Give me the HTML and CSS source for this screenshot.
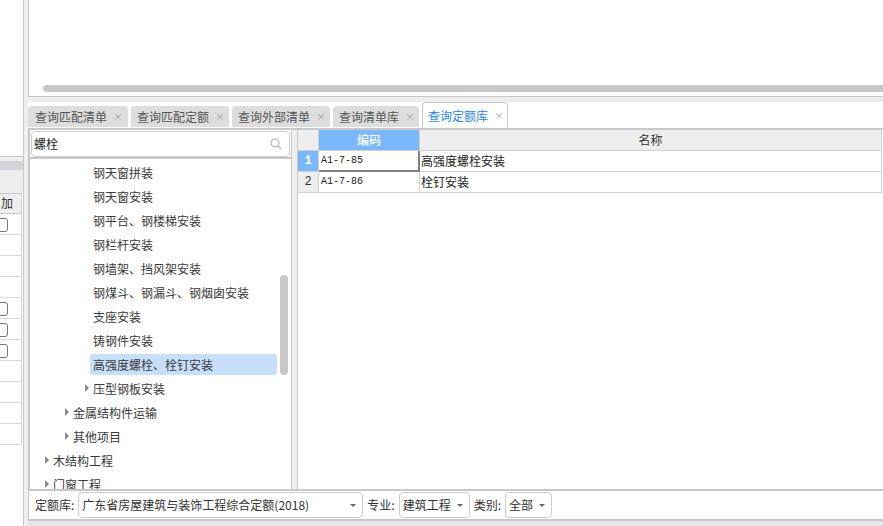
FILE: index.html
```html
<!DOCTYPE html>
<html lang="zh-CN">
<head>
<meta charset="utf-8">
<title>查询定额库</title>
<link rel="stylesheet" href="styles.css">
</head>
<body>
<div class="app">
  <aside class="side">
    <div class="side-top"></div>
    <div class="side-gap"></div>
    <div class="side-banner"></div>
    <div class="side-tools"></div>
    <div class="side-table">
      <div class="side-row side-head">加</div>
      <div class="side-row"><span class="check"></span></div>
      <div class="side-row"></div>
      <div class="side-row"></div>
      <div class="side-row"></div>
      <div class="side-row"><span class="check"></span></div>
      <div class="side-row"><span class="check"></span></div>
      <div class="side-row"><span class="check"></span></div>
      <div class="side-row"></div>
      <div class="side-row"></div>
      <div class="side-row"></div>
      <div class="side-row"></div>
    </div>
  </aside>
  <div class="splitter"></div>
  <main class="main">
    <section class="top-panel">
      <div class="hscroll"></div>
    </section>
    <div class="main-gap"></div>
    <nav class="tabs">
      <div class="tab"><span>查询匹配清单</span><i class="close">×</i></div>
      <div class="tab"><span>查询匹配定额</span><i class="close">×</i></div>
      <div class="tab"><span>查询外部清单</span><i class="close">×</i></div>
      <div class="tab"><span>查询清单库</span><i class="close">×</i></div>
      <div class="tab tab-active"><span>查询定额库</span><i class="close">×</i></div>
    </nav>
    <div class="pane">
      <div class="tree-col">
        <div class="search-wrap">
          <div class="search">
            <span class="search-text">螺栓</span>
            <svg class="search-icon" width="12" height="12" viewBox="0 0 12 12" fill="none" stroke="#b8b8b8" stroke-width="1.3"><circle cx="5" cy="5" r="3.9"/><path d="M8 8l3 3"/></svg>
          </div>
        </div>
        <div class="tree">
          <div class="node leaf"><span class="label">钢天窗拼装</span></div>
          <div class="node leaf"><span class="label">钢天窗安装</span></div>
          <div class="node leaf"><span class="label">钢平台、钢楼梯安装</span></div>
          <div class="node leaf"><span class="label">钢栏杆安装</span></div>
          <div class="node leaf"><span class="label">钢墙架、挡风架安装</span></div>
          <div class="node leaf"><span class="label">钢煤斗、钢漏斗、钢烟囱安装</span></div>
          <div class="node leaf"><span class="label">支座安装</span></div>
          <div class="node leaf"><span class="label">铸钢件安装</span></div>
          <div class="node leaf"><span class="label selected">高强度螺栓、栓钉安装</span></div>
          <div class="node lvl3"><b class="arrow"></b><span class="label">压型钢板安装</span></div>
          <div class="node lvl2"><b class="arrow"></b><span class="label">金属结构件运输</span></div>
          <div class="node lvl2"><b class="arrow"></b><span class="label">其他项目</span></div>
          <div class="node lvl1"><b class="arrow"></b><span class="label">木结构工程</span></div>
          <div class="node lvl1"><b class="arrow"></b><span class="label">门窗工程</span></div>
          <div class="vscroll"></div>
        </div>
      </div>
      <div class="pane-split"></div>
      <div class="grid">
        <div class="cell corner"></div>
        <div class="cell head head-on">编码</div>
        <div class="cell head">名称</div>
        <div class="cell rowhead rowhead-on">1</div>
        <div class="cell code cell-current">A1-7-85</div>
        <div class="cell name">高强度螺栓安装</div>
        <div class="cell rowhead">2</div>
        <div class="cell code">A1-7-86</div>
        <div class="cell name">栓钉安装</div>
      </div>
    </div>
    <footer class="filters">
      <span class="f-label">定额库:</span>
      <div class="select select-lib"><span>广东省房屋建筑与装饰工程综合定额(2018)</span><b class="caret"></b></div>
      <span class="f-label">专业:</span>
      <div class="select select-major"><span>建筑工程</span><b class="caret"></b></div>
      <span class="f-label">类别:</span>
      <div class="select select-type"><span>全部</span><b class="caret"></b></div>
    </footer>
    <div class="bottom-strip"></div>
  </main>
</div>
</body>
</html>
```
FILE: styles.css
```css
* { box-sizing: border-box; }
html, body { margin: 0; padding: 0; height: 100%; overflow: hidden; background: #fff; }
body { font: 12px/16px "Noto Sans CJK SC", "Liberation Sans", sans-serif; color: #333; }
.app { display: flex; width: 883px; height: 526px; }

/* left column */
.side { width: 24px; flex: none; border-right: 1px solid #c8c8c8; display: flex; flex-direction: column; background: #fff; }
.side-top { height: 157px; border-bottom: 1px solid #c8c8c8; }
.side-gap { height: 4px; background: #eee; }
.side-banner { height: 9px; background: #d2d4d9; }
.side-tools { height: 23px; background: #eee; }
.side-table { width: 22px; border-right: 1px solid #d4d4d4; }
.side-row { height: 21px; border-bottom: 1px solid #d8d8d8; position: relative; }
.side-head { background: #eee; border-top: 1px solid #c8c8c8; padding-left: 1px; line-height: 18px; border-bottom-color: #c8c8c8; }
.check { position: absolute; left: -5px; top: 4px; width: 13px; height: 14px; border: 1px solid #777; border-radius: 3px; }

.splitter { width: 4px; flex: none; background: #eee; }

/* main */
.main { flex: 1; min-width: 0; display: flex; flex-direction: column; }
.top-panel { height: 97px; flex: none; border-left: 1px solid #c8c8c8; border-bottom: 1px solid #c8c8c8; padding: 85px 0 0 14px; }
.hscroll { height: 7px; background: #c8c8c8; border-radius: 4px 0 0 4px; }
.main-gap { height: 5px; flex: none; background: #eee; }

.tabs { height: 26px; flex: none; display: flex; align-items: flex-end; gap: 3px; padding-bottom: 1px; }
.tab { height: 21px; padding: 0 6px; background: #ddd; border-radius: 4px 4px 0 0; display: flex; align-items: center; color: #555; }
.tab:first-child { padding-left: 7px; padding-right: 7px; }
.close { width: 6px; margin-left: 8px; font-style: normal; font-size: 9px; color: #999; display: flex; justify-content: center; }
.tab-active { height: 26px; background: #fff; border: 1px solid #c8c8c8; border-bottom: 0; color: #2d86e6; padding: 0 5px; margin-bottom: -1px; }

.pane { height: 361px; flex: none; display: flex; border-top: 2px solid #c8c8cc; }
.tree-col { width: 264px; flex: none; border-left: 2px solid #c8c8cc; border-right: 1px solid #c8c8c8; display: flex; flex-direction: column; }
.search-wrap { padding: 1px; border-bottom: 2px solid #c8c8cc; height: 29px; flex: none; }
.search { height: 26px; border: 1px solid #ccc; border-radius: 4px; display: flex; align-items: center; justify-content: space-between; padding: 0 7px 0 2px; }
.search-text { color: #222; }
.tree { flex: 1; min-height: 0; overflow: hidden; position: relative; padding-top: 1px; }
.node { height: 24px; display: flex; align-items: center; padding-right: 14px; }
.leaf { padding-left: 60px; }
.lvl3 { padding-left: 55px; }
.lvl2 { padding-left: 35px; }
.lvl1 { padding-left: 15px; }
.arrow { width: 0; height: 0; flex: none; border-left: 4px solid #888; border-top: 4px solid transparent; border-bottom: 4px solid transparent; margin-right: 1px; }
.label { flex: 1; height: 21px; line-height: 21px; padding-left: 3px; border-radius: 3px; color: #3a3a3a; }
.selected { background: #c7dffb; }
.vscroll { position: absolute; left: 250px; top: 116px; width: 8px; height: 100px; background: #c8c8c8; border-radius: 4px; }
.pane-split { width: 5px; flex: none; background: #eee; }

.grid { flex: 1; min-width: 0; display: grid; grid-template-columns: 21px 101px 462px; grid-auto-rows: 21px; align-content: start; border-left: 1px solid #c8c8c8; }
.cell { border-right: 1px solid #d0d0d0; border-bottom: 1px solid #d0d0d0; display: flex; align-items: center; overflow: hidden; white-space: nowrap; }
.corner, .head, .rowhead { background: #eee; }
.head { justify-content: center; }
.head-on { background: #7ab8fb; color: #fff; font-weight: 500; }
.rowhead { justify-content: center; font-family: "Liberation Mono", monospace; }
.rowhead-on { background: #7ab8fb; color: #fff; font-weight: 700; }
.code { padding-left: 2px; font-family: "Liberation Mono", monospace; font-size: 10px; color: #222; }
.name { padding-left: 1px; color: #222; }
.cell-current { border-right: 2px solid #808080; border-bottom: 2px solid #808080; }

.filters { height: 32px; flex: none; display: flex; align-items: center; border-top: 2px solid #c8c8cc; border-bottom: 2px solid #c8c8cc; border-left: 1px solid #c8c8c8; padding-left: 6px; }
.f-label { margin: 0 4px; }
.f-label:first-child { margin-left: 0; }
.select { height: 26px; border: 1px solid #ccc; border-radius: 4px; display: flex; align-items: center; justify-content: space-between; padding: 0 6px 0 3px; }
.select-lib { width: 285px; }
.select-major { width: 71px; }
.select-type { width: 47px; }
.caret { width: 0; height: 0; border-top: 3px solid #666; border-left: 3px solid transparent; border-right: 3px solid transparent; }
.bottom-strip { flex: 1; background: #e6e6e6; }
```
